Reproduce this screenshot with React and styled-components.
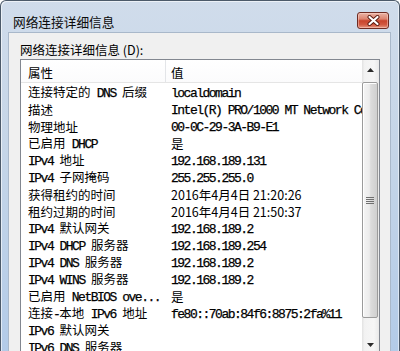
import React from 'react';
import styled, { createGlobalStyle } from 'styled-components';

const Global = createGlobalStyle`
  html, body {
    margin: 0;
    padding: 0;
    background: #ffffff;
  }
  body {
    font-family: 'Noto Sans CJK SC', 'Noto Sans', sans-serif;
    color: #000;
  }
`;

const Window = styled.div`
  width: 400px;
  height: 351px;
  box-sizing: border-box;
  overflow: hidden;
  border: 1px solid #4c5a6a;
  border-bottom: none;
  border-radius: 6px 6px 0 0;
  background: linear-gradient(to bottom, #d0dceb 0%, #c6d6e8 40%, #b3cbe8 100%);
  box-shadow: inset 1px 1px 0 rgba(255, 255, 255, 0.6), inset -1px 0 0 rgba(255, 255, 255, 0.5);
  display: flex;
  flex-direction: column;
`;

const TitleBar = styled.div`
  height: 31px;
  box-sizing: border-box;
  flex-shrink: 0;
  display: flex;
  align-items: center;
  justify-content: space-between;
  padding: 7px 10px 0 12px;
`;

const Title = styled.div`
  font-size: 12.7px;
  line-height: 17px;
  margin-top: 2px;
  color: #0b0b0b;
  white-space: nowrap;
`;

const CloseButton = styled.div`
  width: 32px;
  height: 17px;
  box-sizing: border-box;
  border: 1px solid #6e2b22;
  border-radius: 3px;
  background: linear-gradient(
    to bottom,
    #eab3a5 0%,
    #dd8470 40%,
    #c8442c 52%,
    #d25a42 78%,
    #e69a84 100%
  );
  box-shadow: inset 0 0 0 1px rgba(255, 220, 210, 0.45);
  display: flex;
  align-items: center;
  justify-content: center;
`;

const Client = styled.div`
  flex: 1;
  margin: 0 8px 0 7px;
  border: 1px solid #a9b8ca;
  border-bottom: none;
  background: #f0f0f0;
  padding: 8px 9px 0 11px;
  min-height: 0;
`;

const Label = styled.div`
  font-size: 12.5px;
  line-height: 17px;
  height: 17px;
  margin-bottom: 1px;
  white-space: nowrap;
`;

const ListBox = styled.div`
  width: 360px;
  height: 297px;
  box-sizing: border-box;
  border: 1px solid #828790;
  background: #fff;
  display: flex;
`;

const Columns = styled.div`
  flex: 1;
  min-width: 0;
  display: flex;
  flex-direction: column;
`;

const HeaderRow = styled.div`
  height: 26px;
  box-sizing: border-box;
  border-bottom: 1px solid #e5e5e5;
  display: flex;
  background: linear-gradient(to bottom, #ffffff, #fbfbfc);
`;

const HeaderCell = styled.div`
  font-size: 12.5px;
  line-height: 17px;
  display: flex;
  align-items: center;
  box-sizing: border-box;
  padding: 3px 0 0 ${(p) => p.$pad}px;
  width: ${(p) => (p.$w ? `${p.$w}px` : 'auto')};
  flex: ${(p) => (p.$w ? 'none' : 1)};
  border-right: ${(p) => (p.$w ? '1px solid #e3e5e8' : 'none')};
`;

const Row = styled.div`
  height: 17px;
  display: flex;
  align-items: center;
  flex-shrink: 0;
`;

const Cell = styled.div`
  line-height: 17px;
  white-space: nowrap;
  overflow-x: clip;
  overflow-y: visible;
  box-sizing: border-box;
  padding-left: ${(p) => p.$pad}px;
  width: ${(p) => (p.$w ? `${p.$w}px` : 'auto')};
  flex: ${(p) => (p.$w ? 'none' : 1)};
  min-width: 0;
`;

const Han = styled.span`
  font-family: 'Noto Sans CJK SC', sans-serif;
  font-size: 12.5px;
  line-height: 17px;
`;

const Mono = styled.span`
  font-family: 'Liberation Mono', monospace;
  font-size: 13px;
  line-height: 17px;
  letter-spacing: -1.5px;
  white-space: pre;
  -webkit-text-stroke: 0.25px #000;
`;

const ScrollBar = styled.div`
  width: 17px;
  flex-shrink: 0;
  display: flex;
  flex-direction: column;
  background: linear-gradient(to right, #e2e2e2 0%, #f2f2f2 15%, #f6f6f6 70%, #e9e9e9 100%);
`;

const ArrowButton = styled.div`
  height: 20px;
  flex-shrink: 0;
  display: flex;
  align-items: center;
  justify-content: center;
`;

const Track = styled.div`
  flex: 1;
  padding: 2px 1px 0 0;
`;

const Thumb = styled.div`
  height: 236px;
  box-sizing: border-box;
  border: 1px solid #9b9b9b;
  border-radius: 2px;
  background: linear-gradient(to right, #f5f5f5 0%, #ececec 45%, #dcdcdc 55%, #cfcfcf 100%);
  box-shadow: inset 1px 1px 0 #ffffff;
  display: flex;
  align-items: center;
  justify-content: center;
`;

const SPLIT = /([\u2e80-\u9fff\uff00-\uffef]+)/;
const IS_HAN = /^[\u2e80-\u9fff\uff00-\uffef]+$/;

const Txt = ({ text, plain }) => {
  if (plain) return <Han>{text}</Han>;
  return text
    .split(SPLIT)
    .filter(Boolean)
    .map((part, i) => (IS_HAN.test(part) ? <Han key={i}>{part}</Han> : <Mono key={i}>{part}</Mono>));
};

const rows = [
  ['连接特定的 DNS 后缀', 'localdomain'],
  ['描述', 'Intel(R) PRO/1000 MT Network Connection'],
  ['物理地址', '00-0C-29-3A-B9-E1'],
  ['已启用 DHCP', '是'],
  ['IPv4 地址', '192.168.189.131'],
  ['IPv4 子网掩码', '255.255.255.0'],
  ['获得租约的时间', '2016年4月4日 21:20:26', true],
  ['租约过期的时间', '2016年4月4日 21:50:37', true],
  ['IPv4 默认网关', '192.168.189.2'],
  ['IPv4 DHCP 服务器', '192.168.189.254'],
  ['IPv4 DNS 服务器', '192.168.189.2'],
  ['IPv4 WINS 服务器', '192.168.189.2'],
  ['已启用 NetBIOS ove...', '是'],
  ['连接-本地 IPv6 地址', 'fe80::70ab:84f6:8875:2fa%11'],
  ['IPv6 默认网关', ''],
  ['IPv6 DNS 服务器', ''],
];

const CloseX = () => (
  <svg width="13" height="11" viewBox="0 0 13 11">
    <path d="M2.5 2 L10.5 9 M10.5 2 L2.5 9" stroke="#5a1a10" strokeWidth="4" strokeLinecap="round" />
    <path d="M2.5 2 L10.5 9 M10.5 2 L2.5 9" stroke="#ffffff" strokeWidth="2.2" strokeLinecap="round" />
  </svg>
);

const Arrow = ({ down }) => (
  <svg width="7" height="4" viewBox="0 0 7 4">
    <polygon points={down ? '0,0 7,0 3.5,4' : '3.5,0 7,4 0,4'} fill="#2b2b2b" />
  </svg>
);

const Grip = () => (
  <svg width="8" height="7" viewBox="0 0 8 7">
    {[0.5, 2.5, 4.5, 6.5].map((y) => (
      <line key={y} x1="0" x2="8" y1={y} y2={y} stroke="#6f6f6f" strokeWidth="1" />
    ))}
  </svg>
);

export default function App() {
  return (
    <>
      <Global />
      <Window>
        <TitleBar>
          <Title>网络连接详细信息</Title>
          <CloseButton>
            <CloseX />
          </CloseButton>
        </TitleBar>
        <Client>
          <Label>网络连接详细信息 (D):</Label>
          <ListBox>
            <Columns>
              <HeaderRow>
                <HeaderCell $w={145} $pad={7}>属性</HeaderCell>
                <HeaderCell $pad={5}>值</HeaderCell>
              </HeaderRow>
              {rows.map(([name, value, plain]) => (
                <Row key={name}>
                  <Cell $w={145} $pad={7}>
                    <Txt text={name} />
                  </Cell>
                  <Cell $pad={5}>
                    <Txt text={value} plain={plain} />
                  </Cell>
                </Row>
              ))}
            </Columns>
            <ScrollBar>
              <ArrowButton>
                <Arrow />
              </ArrowButton>
              <Track>
                <Thumb>
                  <Grip />
                </Thumb>
              </Track>
              <ArrowButton>
                <Arrow down />
              </ArrowButton>
            </ScrollBar>
          </ListBox>
        </Client>
      </Window>
    </>
  );
}
